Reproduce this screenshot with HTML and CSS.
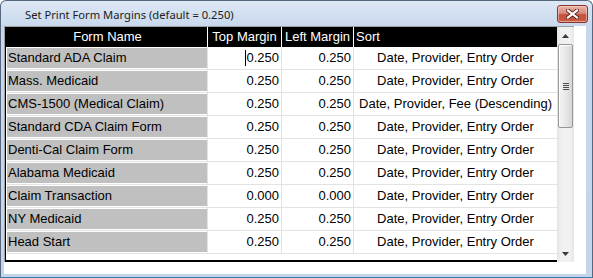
FILE: index.html
```html
<!DOCTYPE html>
<html lang="en">
<head>
  <meta charset="UTF-8" />
  <title>Set Print Form Margins</title>
  <link rel="stylesheet" href="styles.css">
</head>
<body>
  <div class="window">
    <div class="titlebar">
      <span class="title">Set Print Form Margins (default = 0.250)</span>
      <button class="close" aria-label="Close">
        <svg width="13" height="10" viewBox="0 0 13 10">
          <path d="M2 1.5 L11 8.5 M11 1.5 L2 8.5" stroke="#5b2219" stroke-width="4" stroke-linecap="square" />
          <path d="M2 1.5 L11 8.5 M11 1.5 L2 8.5" stroke="#ffffff" stroke-width="2.2" stroke-linecap="square" />
        </svg>
      </button>
    </div>

    <div class="client">
      <div class="grid">
        <div class="sheet">
          <div class="row head">
            <div class="cell name">Form Name</div>
            <div class="cell">Top Margin</div>
            <div class="cell">Left Margin</div>
            <div class="cell sort">Sort</div>
          </div>
          <div class="row">
            <div class="cell name">Standard ADA Claim</div>
            <div class="cell num"><span class="caret"></span>0.250</div>
            <div class="cell num">0.250</div>
            <div class="cell sort">Date, Provider, Entry Order</div>
          </div>
          <div class="row">
            <div class="cell name">Mass. Medicaid</div>
            <div class="cell num">0.250</div>
            <div class="cell num">0.250</div>
            <div class="cell sort">Date, Provider, Entry Order</div>
          </div>
          <div class="row">
            <div class="cell name">CMS-1500 (Medical Claim)</div>
            <div class="cell num">0.250</div>
            <div class="cell num">0.250</div>
            <div class="cell sort">Date, Provider, Fee (Descending)</div>
          </div>
          <div class="row">
            <div class="cell name">Standard CDA Claim Form</div>
            <div class="cell num">0.250</div>
            <div class="cell num">0.250</div>
            <div class="cell sort">Date, Provider, Entry Order</div>
          </div>
          <div class="row">
            <div class="cell name">Denti-Cal Claim Form</div>
            <div class="cell num">0.250</div>
            <div class="cell num">0.250</div>
            <div class="cell sort">Date, Provider, Entry Order</div>
          </div>
          <div class="row">
            <div class="cell name">Alabama Medicaid</div>
            <div class="cell num">0.250</div>
            <div class="cell num">0.250</div>
            <div class="cell sort">Date, Provider, Entry Order</div>
          </div>
          <div class="row">
            <div class="cell name">Claim Transaction</div>
            <div class="cell num">0.000</div>
            <div class="cell num">0.000</div>
            <div class="cell sort">Date, Provider, Entry Order</div>
          </div>
          <div class="row">
            <div class="cell name">NY Medicaid</div>
            <div class="cell num">0.250</div>
            <div class="cell num">0.250</div>
            <div class="cell sort">Date, Provider, Entry Order</div>
          </div>
          <div class="row">
            <div class="cell name">Head Start</div>
            <div class="cell num">0.250</div>
            <div class="cell num">0.250</div>
            <div class="cell sort">Date, Provider, Entry Order</div>
          </div>
        </div>

        <div class="scrollbar">
          <div class="sb-btn">
            <svg width="7" height="4" viewBox="0 0 7 4"><polygon points="0,4 7,4 3.5,0" fill="#3a3a3a" /></svg>
          </div>
          <div class="sb-thumb">
            <span class="grip"></span>
          </div>
          <div class="sb-track"></div>
          <div class="sb-btn">
            <svg width="7" height="4" viewBox="0 0 7 4"><polygon points="0,0 7,0 3.5,4" fill="#3a3a3a" /></svg>
          </div>
        </div>
      </div>
    </div>
  </div>
</body>
</html>
```

FILE: styles.css
```css
body {
  margin: 0;
  font-family: "Liberation Sans", Arial, sans-serif;
  background: #ffffff;
}
.window {
  width: 593px;
  height: 278px;
  box-sizing: border-box;
  border: 1px solid #55687f;
  border-bottom-color: #2f7fb0;
  border-radius: 6px 6px 0 0;
  padding: 0 6px 3px 3px;
  background: linear-gradient(#dde8f5, #c8d8ec 26px, #c4d5ea);
  display: flex;
  flex-direction: column;
}
.titlebar {
  height: 25px;
  flex: none;
  display: flex;
  align-items: flex-start;
  justify-content: space-between;
  margin: 0 -6px 0 -3px;
  padding: 0 4px 0 24px;
}
.title {
  margin-top: 6px;
  font-family: "Noto Sans", "Open Sans", sans-serif;
  font-size: 11.2px;
  line-height: 16px;
  color: #1c1c1c;
}
.close {
  margin-top: 4px;
  width: 31px;
  height: 18px;
  padding: 0;
  border: 1px solid #8a3429;
  border-radius: 3px;
  background: linear-gradient(#eab2a6, #d98b7b 45%, #c4503b 55%, #c95a41);
  box-shadow: inset 0 0 0 1px rgba(255, 220, 210, 0.55);
  display: flex;
  align-items: center;
  justify-content: center;
}
.client {
  flex: 1;
  background: #ffffff;
  display: flex;
  align-items: flex-start;
}
.grid {
  display: flex;
  border-top: 1px solid #a0a0a0;
  border-left: 1px solid #a0a0a0;
}
.sheet {
  width: 551px;
  height: 233px;
  border-left: 1px solid #000000;
  border-bottom: 2px solid #000000;
  font-size: 13px;
  color: #000000;
}
.row {
  display: grid;
  grid-template-columns: 202px 74px 72px 203px;
  height: 23px;
}
.cell {
  box-sizing: border-box;
  border-right: 1px solid #e3e3e3;
  border-bottom: 1px solid #e3e3e3;
  line-height: 22px;
  white-space: nowrap;
  overflow: hidden;
}
.cell:last-child {
  border-right: none;
}
.cell.name {
  background: #c0c0c0;
  padding-left: 2px;
  box-shadow: inset 0 1px #ffffff, inset 0 -1px #ffffff, inset 1px 0 #ffffff;
}
.cell.num {
  text-align: right;
  padding-right: 2px;
}
.cell.sort {
  text-align: center;
}
.head {
  height: 20px;
  background: #000000;
  color: #ffffff;
}
.head .cell {
  border-right-color: #ffffff;
  border-bottom: none;
  line-height: 19px;
  text-align: center;
  background: none;
  box-shadow: none;
}
.head .cell.sort {
  text-align: left;
  padding-left: 2px;
}
.caret {
  display: inline-block;
  width: 1px;
  height: 16px;
  background: #000000;
  vertical-align: -4px;
}
.scrollbar {
  width: 17px;
  height: 235px;
  display: flex;
  flex-direction: column;
  background: linear-gradient(to right, #e4e4e4, #f1f1f1 25%, #f1f1f1 75%, #e6e6e6);
}
.sb-btn {
  height: 17px;
  flex: none;
  display: flex;
  align-items: center;
  justify-content: center;
}
.sb-thumb {
  height: 82px;
  margin: 0 1px;
  border: 1px solid #979797;
  border-radius: 2px;
  background: linear-gradient(to right, #f4f4f4, #e8e8e8 50%, #d6d6d6);
  box-shadow: inset 1px 1px #ffffff;
  display: flex;
  align-items: center;
  justify-content: center;
}
.grip {
  width: 6px;
  height: 7px;
  background: repeating-linear-gradient(#4d4d4d 0 1px, transparent 1px 2px);
}
.sb-track {
  flex: 1;
}
```
